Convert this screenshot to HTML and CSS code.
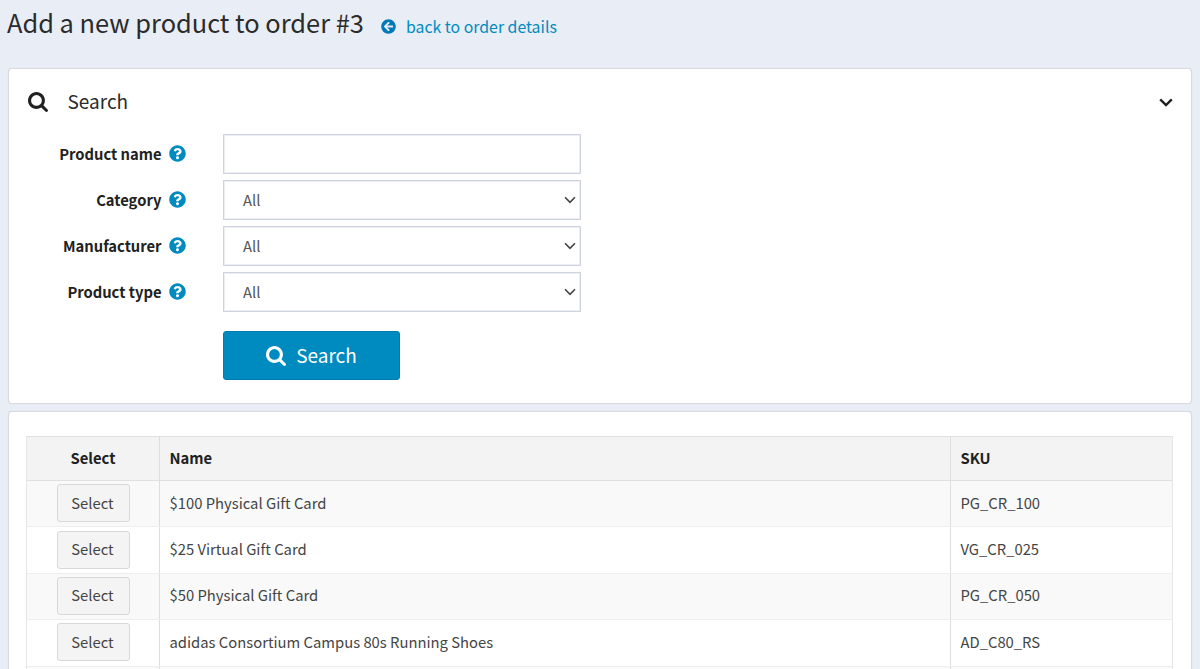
FILE: index.html
```html
<!DOCTYPE html>
<html lang="en">
<head>
<meta charset="utf-8">
<title>Add a new product to order #3</title>
<link rel="stylesheet" href="styles.css">
</head>
<body>
<svg class="sprite" aria-hidden="true">
  <symbol id="search" viewBox="0 128 1664 1664"><path d="M1152 832q0-185-131.500-316.500T704 384 387.500 515.500 256 832t131.500 316.500T704 1280t316.500-131.500T1152 832zm512 832q0 52-38 90t-90 38q-54 0-90-38l-343-342q-179 124-399 124-143 0-273.500-55.500t-225-150-150-225T0 832t55.500-273.500 150-225 225-150T704 128t273.500 55.500 225 150 150 225T1408 832q0 220-124 399l343 343q37 37 37 90z"/></symbol>
  <symbol id="help" viewBox="0 0 512 512"><path d="M504 256c0 136.997-111.043 248-248 248S8 392.997 8 256C8 119.083 119.043 8 256 8s248 111.083 248 248zM262.655 90c-54.497 0-89.255 22.957-116.549 63.758-3.536 5.286-2.353 12.415 2.715 16.258l34.699 26.310c5.205 3.947 12.621 3.008 16.665-2.122 17.864-22.658 30.113-35.797 57.303-35.797 20.429 0 45.698 13.148 45.698 32.958 0 14.976-12.363 22.667-32.534 33.976C247.128 238.528 216 254.941 216 296v4c0 6.627 5.373 12 12 12h56c6.627 0 12-5.373 12-12v-1.333c0-28.462 83.186-29.647 83.186-106.667 0-58.002-60.165-102-116.531-102zM256 338c-25.365 0-46 20.635-46 46 0 25.364 20.635 46 46 46s46-20.636 46-46c0-25.365-20.635-46-46-46z"/></symbol>
  <symbol id="back" viewBox="0 0 512 512"><path d="M256 504C119 504 8 393 8 256S119 8 256 8s248 111 248 248-111 248-248 248zm28.900-143.600L209.400 288H392c13.300 0 24-10.700 24-24v-16c0-13.300-10.700-24-24-24H209.400l75.500-72.400c9.700-9.300 9.900-24.800.4-34.300l-11-10.900c-9.400-9.400-24.600-9.400-33.900 0L107.700 239c-9.400 9.400-9.400 24.600 0 33.900l132.700 132.700c9.400 9.400 24.600 9.400 33.900 0l11-10.900c9.500-9.500 9.300-25-.4-34.300z"/></symbol>
  <symbol id="chevron" viewBox="0 0 14 9"><path class="stroke" d="M1.200 1.300 7 7.100l5.800-5.800"/></symbol>
</svg>

<header class="page-header">
  <h1 class="page-title">Add a new product to order #3</h1>
  <a class="back-link" href="#"><svg class="back-icon"><use href="#back"/></svg><span class="back-text">back to order details</span></a>
</header>

<main class="content">
  <section class="card search-card">
    <div class="search-head">
      <svg class="search-icon"><use href="#search"/></svg>
      <h2 class="search-title">Search</h2>
      <svg class="toggle-icon"><use href="#chevron"/></svg>
    </div>
    <form class="search-form">
      <div class="row">
        <label class="label" for="name">Product name</label><svg class="help-icon"><use href="#help"/></svg>
        <input class="field" id="name" type="text">
      </div>
      <div class="row">
        <span class="label">Category</span><svg class="help-icon"><use href="#help"/></svg>
        <div class="field select">All<svg class="select-icon"><use href="#chevron"/></svg></div>
      </div>
      <div class="row">
        <span class="label">Manufacturer</span><svg class="help-icon"><use href="#help"/></svg>
        <div class="field select">All<svg class="select-icon"><use href="#chevron"/></svg></div>
      </div>
      <div class="row">
        <span class="label">Product type</span><svg class="help-icon"><use href="#help"/></svg>
        <div class="field select">All<svg class="select-icon"><use href="#chevron"/></svg></div>
      </div>
      <button class="search-button" type="button"><svg class="button-icon"><use href="#search"/></svg><span class="button-text">Search</span></button>
    </form>
  </section>

  <section class="card table-card">
    <div class="grid">
      <div class="grid-head">
        <div class="cell center">Select</div><div class="cell">Name</div><div class="cell">SKU</div>
      </div>
      <div class="grid-row">
        <div class="cell center"><button class="select-button" type="button">Select</button></div><div class="cell">$100 Physical Gift Card</div><div class="cell">PG_CR_100</div>
      </div>
      <div class="grid-row">
        <div class="cell center"><button class="select-button" type="button">Select</button></div><div class="cell">$25 Virtual Gift Card</div><div class="cell">VG_CR_025</div>
      </div>
      <div class="grid-row">
        <div class="cell center"><button class="select-button" type="button">Select</button></div><div class="cell">$50 Physical Gift Card</div><div class="cell">PG_CR_050</div>
      </div>
      <div class="grid-row">
        <div class="cell center"><button class="select-button" type="button">Select</button></div><div class="cell">adidas Consortium Campus 80s Running Shoes</div><div class="cell">AD_C80_RS</div>
      </div>
      <div class="grid-row grid-row-cut">
        <div class="cell center"></div><div class="cell"></div><div class="cell"></div>
      </div>
    </div>
  </section>
</main>
</body>
</html>
```
FILE: styles.css
```css
* { box-sizing: border-box; }
body {
  margin: 0;
  height: 669px;
  overflow: hidden;
  background: #e9edf5;
  color: #212121;
  font-family: "Noto Sans CJK SC", "Open Sans", sans-serif;
  font-size: 14.800px;
  line-height: 20px;
}
button, input { font: inherit; }
svg { flex: none; fill: currentColor; }
.sprite { display: none; }
.stroke { fill: none; stroke: currentColor; stroke-width: var(--stroke, 2.4); }

.page-header { display: flex; height: 68px; padding: 3px 7px; }
.page-title { margin: 0; color: #2b2b2b; font-size: 25.400px; font-weight: 400; line-height: 38px; white-space: nowrap; width: 374px; }
.back-link { display: flex; align-items: center; height: 47px; color: #008bc0; text-decoration: none; font-size: 15.850px; }
.back-icon { width: 15px; height: 15px; color: #0079b8; }
.back-text { margin: 1px 0 0 10px; }

.content { display: flex; flex-direction: column; gap: 7px; padding: 0 8px; }
.card { background: #fff; border: 1px solid #d8dade; border-radius: 4px; box-shadow: 0 0 1px #d0d3d8; }
.search-card { height: 336px; }
.search-head { display: flex; align-items: center; height: 65px; padding: 0 18px 0 19px; }
.search-icon { width: 20px; height: 20px; }
.search-title { flex: 1; margin: 0 0 1px 19.500px; color: #2b2b2b; font-size: 19px; font-weight: 400; line-height: 26px; }
.toggle-icon { width: 14px; height: 9px; margin-top: 2px; }

.search-form { display: flex; flex-direction: column; gap: 6px; }
.row { display: flex; align-items: center; height: 40px; }
.label { width: 152.500px; text-align: right; font-size: 14.750px; font-weight: 700; white-space: nowrap; }
.help-icon { width: 17px; height: 17px; margin: 0 37.500px 1px 7px; color: #008bc0; }
.field { width: 358px; height: 40px; padding: 0 19px; border: 1px solid #ced3dd; border-radius: 0; background: #fff; color: #555; box-shadow: inset 0 0 0 1px #eceef3; }
.select { display: flex; align-items: center; justify-content: space-between; padding-right: 4px; }
.select-icon { width: 12px; height: 8px; color: #444; --stroke: 1.9; }
.search-button { display: flex; align-items: center; justify-content: center; gap: 10px; width: 177px; height: 49px; margin: 13px 0 0 214px; padding: 0; border: 1px solid #007dad; border-radius: 3px; background: #008bc0; color: #fff; font-size: 19px; }
.button-icon { width: 20px; height: 20px; }
.button-text { margin-bottom: 2px; }

.table-card { height: 258px; padding: 24px 18px 0 17px; border-bottom: 0; border-radius: 4px 4px 0 0; }
.grid { border-left: 1px solid #e6e6e6; border-right: 1px solid #e6e6e6; }
.grid-head, .grid-row { display: grid; grid-template-columns: 132px 791px 1fr; }
.grid-head { height: 45px; background: #f3f3f3; border: solid #e0e0e0; border-width: 1px 0; font-weight: 700; }
.grid-row { height: 46.400px; border-bottom: 1px solid #eee; color: #444; }
.grid-row:nth-child(even) { background: #f9f9f9; }
.grid-row-cut { height: 2px; border-bottom: 0; }
.cell { display: flex; align-items: center; padding: 0 0 2px 9.500px; border-left: 1px solid #ddd; }
.center { justify-content: center; padding: 0 0 1px 0; border: 0; }
.grid-head .center { padding-bottom: 2px; }
.grid-row-cut .cell { padding: 0; }
.select-button { width: 73px; height: 38px; padding: 0 1px 1px 0; border: 1px solid #d8d8d8; border-radius: 3px; background: #f4f4f4; color: #444; }
```
